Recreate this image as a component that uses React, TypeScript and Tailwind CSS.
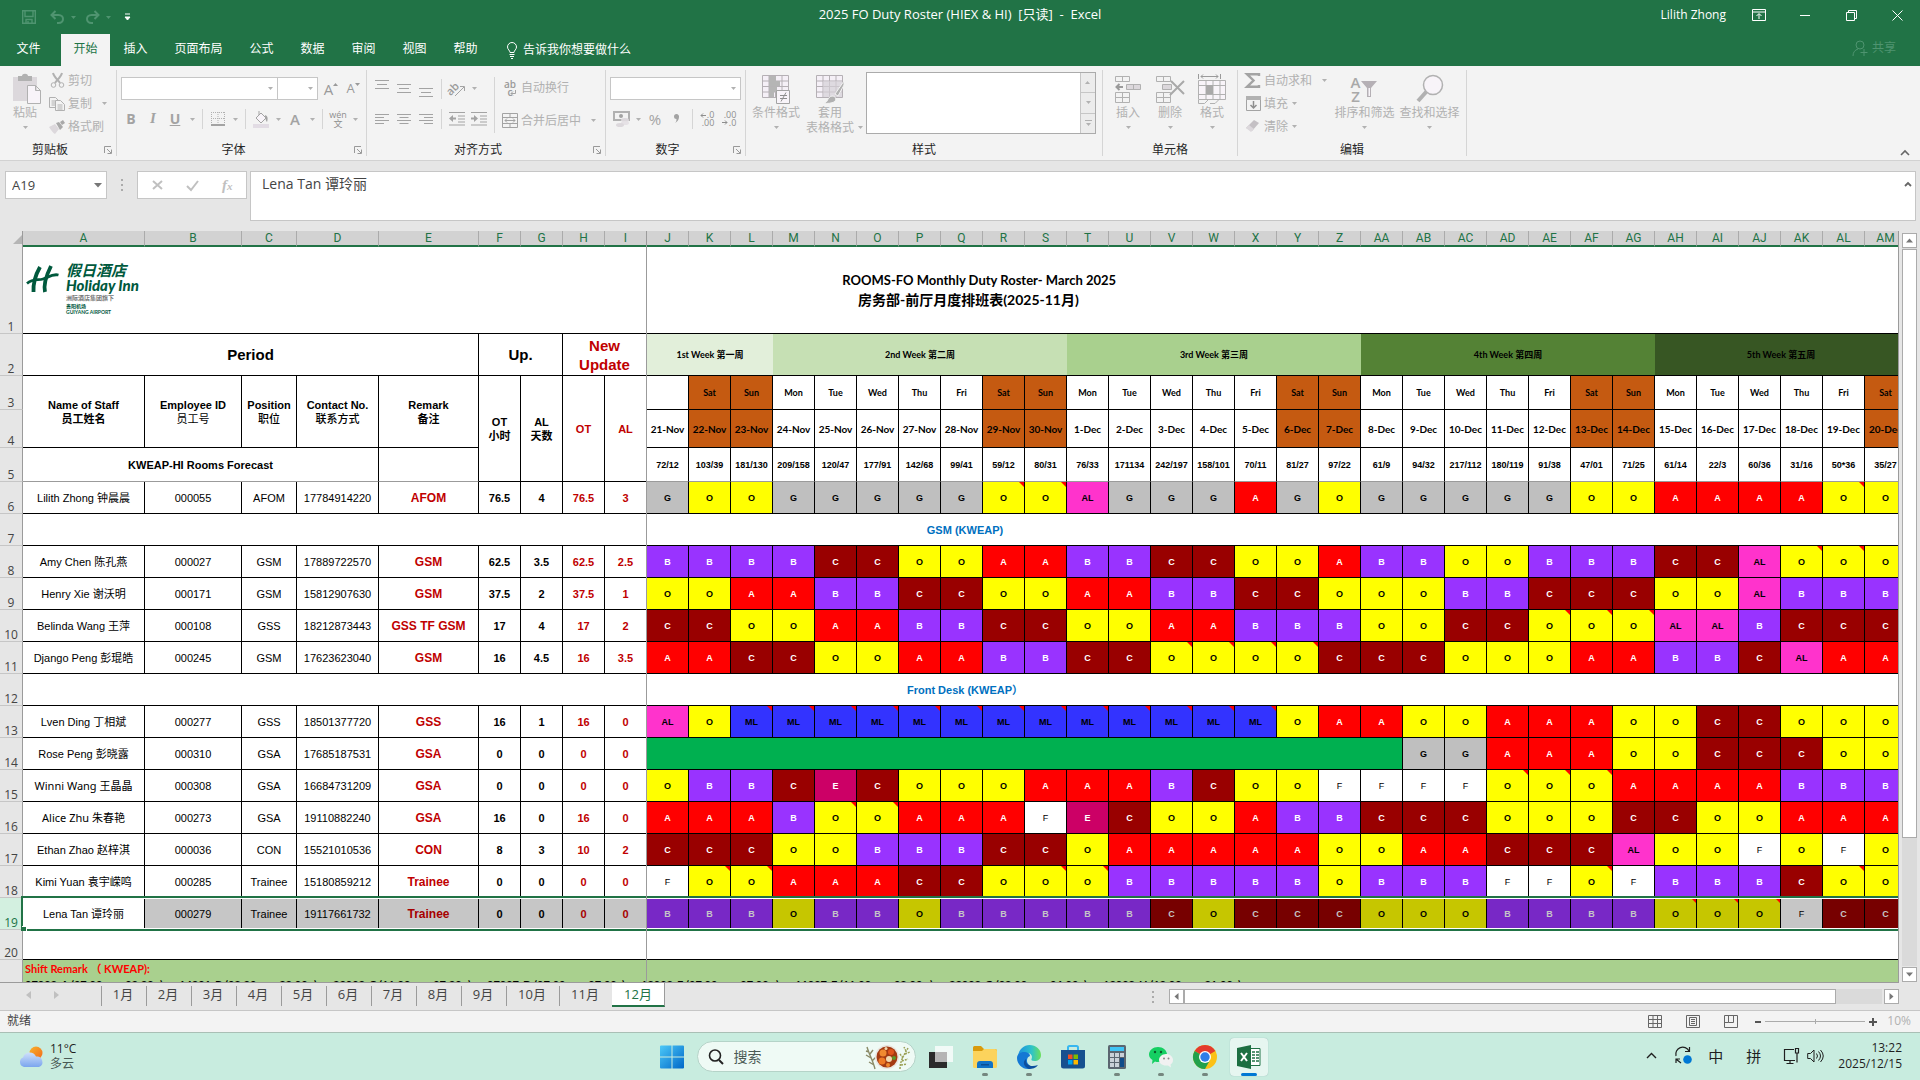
import React from 'react'
import clsx from 'clsx'

const SHIFT_STYLES: Record<string, string> = {
  A: 'bg-[#ff0000] text-white',
  B: 'bg-[#9933ff] text-white',
  C: 'bg-[#990000] text-white',
  E: 'bg-[#cc0066] text-white',
  F: 'bg-white text-black',
  G: 'bg-[#bfbfbf] text-black',
  O: 'bg-[#ffff00] text-black',
  AL: 'bg-[#ff33cc] text-black',
  ML: 'bg-[#3333ff] text-black',
}

// the selected row is drawn darker, as if under a grey veil
const SELECTED_STYLES: Record<string, string> = {
  B: 'bg-[#7828c6] text-[#c6c6c6]',
  C: 'bg-[#770000] text-[#c6c6c6]',
  O: 'bg-[#c6c600] text-black',
  F: 'bg-[#c6c6c6] text-black',
}

const COLUMNS = 'A B C D E F G H I J K L M N O P Q R S T U V W X Y Z AA AB AC AD AE AF AG AH AI AJ AK AL AM'.split(' ')

const DAYS = ['', 'Sat', 'Sun', 'Mon', 'Tue', 'Wed', 'Thu', 'Fri', 'Sat', 'Sun', 'Mon', 'Tue', 'Wed', 'Thu', 'Fri', 'Sat', 'Sun', 'Mon', 'Tue', 'Wed', 'Thu', 'Fri', 'Sat', 'Sun', 'Mon', 'Tue', 'Wed', 'Thu', 'Fri', 'Sat']

const DATES = DAYS.map((_, i) => (i < 10 ? `${21 + i}-Nov` : `${i - 9}-Dec`))

const FORECAST = '72/12 103/39 181/130 209/158 120/47 177/91 142/68 99/41 59/12 80/31 76/33 171134 242/197 158/101 70/11 81/27 97/22 61/9 94/32 217/112 180/119 91/38 47/01 71/25 61/14 22/3 60/36 31/16 50*36 35/27'.split(' ')

const WEEKS = [
  { label: '1st Week 第一周', span: 3, bg: 'bg-[#e2efda]' },
  { label: '2nd Week 第二周', span: 7, bg: 'bg-[#c6e0b4]' },
  { label: '3rd Week 第三周', span: 7, bg: 'bg-[#a9d08e]' },
  { label: '4th Week 第四周', span: 7, bg: 'bg-[#548235]' },
  { label: '5th Week 第五周', span: 6, bg: 'bg-[#375623]' },
]

type Staff = {
  row: number
  name: string
  id: string
  position: string
  phone: string
  remark: string
  hours: string[]
  shifts: string // a star marks a cell with a note
  leave?: number
  wide?: boolean
}

const MANAGER: Staff[] = [
  { row: 6, name: 'Lilith Zhong 钟晨晨', id: '000055', position: 'AFOM', phone: '17784914220', remark: 'AFOM', hours: ['76.5', '4', '76.5', '3'], shifts: 'G O O G G G G G O* O* AL G G G A G O G G G G G O O A A A A O* O' },
]

const GSM: Staff[] = [
  { row: 8, name: 'Amy Chen 陈孔燕', id: '000027', position: 'GSM', phone: '17889722570', remark: 'GSM', hours: ['62.5', '3.5', '62.5', '2.5'], shifts: 'B B B B C C O O A A B B C C O O A B B O O B B B C C AL O* O* O' },
  { row: 9, name: 'Henry Xie 谢沃明', id: '000171', position: 'GSM', phone: '15812907630', remark: 'GSM', hours: ['37.5', '2', '37.5', '1'], shifts: 'O O A A B B C C O O A A B B C C O O O B B C C C O O AL B B B' },
  { row: 10, name: 'Belinda Wang 王萍', id: '000108', position: 'GSS', phone: '18212873443', remark: 'GSS TF GSM', hours: ['17', '4', '17', '2'], shifts: 'C C O O A A B B C C O O A A B B B O O C C O* O* O* AL AL B C C C' },
  { row: 11, name: 'Django Peng 彭琨皓', id: '000245', position: 'GSM', phone: '17623623040', remark: 'GSM', hours: ['16', '4.5', '16', '3.5'], shifts: 'A A C C O O A A B B C C O* O* O* O* C C C O O O A A B B C AL A A' },
]

const FRONT_DESK: Staff[] = [
  { row: 13, name: 'Lven Ding 丁相斌', id: '000277', position: 'GSS', phone: '18501377720', remark: 'GSS', hours: ['16', '1', '16', '0'], shifts: 'AL O ML* ML* ML* ML* ML* ML* ML* ML* ML* ML* ML* ML* ML* O A A O O A A A O O C C O O O' },
  { row: 14, name: 'Rose Peng 彭晓露', id: '000310', position: 'GSA', phone: '17685187531', remark: 'GSA', hours: ['0', '0', '0', '0'], leave: 18, shifts: 'G G A A A O O C C C O O' },
  { row: 15, name: 'Winni Wang 王晶晶', id: '000308', position: 'GSA', phone: '16684731209', remark: 'GSA', hours: ['0', '0', '0', '0'], wide: true, shifts: 'O B B C E C O O O A A A B C O O F F F F O* O* O* A A A A B B B' },
  { row: 16, name: 'Alice Zhu 朱春艳', id: '000273', position: 'GSA', phone: '19110882240', remark: 'GSA', hours: ['16', '0', '16', '0'], wide: true, shifts: 'A A A B O* O* A A A F E C O O A B B C C C O O O C C O O A A A' },
  { row: 17, name: 'Ethan Zhao 赵梓淇', id: '000036', position: 'CON', phone: '15521010536', remark: 'CON', hours: ['8', '3', '10', '2'], shifts: 'C C C O O B B B C C O A A A A A O O A A C C C AL O O F O F O' },
  { row: 18, name: 'Kimi Yuan 袁宇嵘鸣', id: '000285', position: 'Trainee', phone: '15180859212', remark: 'Trainee', hours: ['0', '0', '0', '0'], shifts: 'F O* O* A A A C C O O* O* B B B B B O B B B F F O* F B B B C O* O' },
  { row: 19, name: 'Lena Tan 谭玲丽', id: '000279', position: 'Trainee', phone: '19117661732', remark: 'Trainee', hours: ['0', '0', '0', '0'], shifts: 'B B B O B B O B B B B B C O C C C O O O B B B B O* O* O* F C C' },
]

const REMARKS = [
  '07003-A (07:00 —— 03:30',
  '14301-B (03:30 —— 23:00',
  '23003-C (11:00 —— 07:30',
  '07007-D (07:00 —— 07:00',
  '18003-E (07:00 —— 07:00',
  '11007-F (11:00 —— 08:00',
  '23003-G (08:00 —— 06:00',
  '12008-H (13:00 —— 21:00',
]

const SHEETS = ['1月', '2月', '3月', '4月', '5月', '6月', '7月', '8月', '9月', '10月', '11月', '12月']

/* ---------- ribbon pieces ---------- */

function Svg({ w, h, className, children }: { w: number; h: number; className?: string; children: React.ReactNode }) {
  return (
    <svg width={w} height={h} viewBox={`0 0 ${w} ${h}`} fill="none" className={clsx('shrink-0 overflow-visible', className)} aria-hidden="true">
      {children}
    </svg>
  )
}

function Caret({ className }: { className?: string }) {
  return (
    <span className={clsx('flex w-3 shrink-0 items-center justify-center', className)}>
      <Svg w={5} h={3}><path d="M0 0h5L2.500 3z" fill="currentColor" /></Svg>
    </span>
  )
}

const Sep = () => <span className="mx-1 h-5 w-px shrink-0 bg-[#d5d5d5]" />

function Tool({ label, children }: { label: string; children: React.ReactNode }) {
  return (
    <button type="button" aria-label={label} className="flex h-6 w-[22px] shrink-0 items-center justify-center">
      {children}
    </button>
  )
}

function BigTool({ label, second, className, children }: { label: string; second?: string; className: string; children: React.ReactNode }) {
  return (
    <button type="button" className={clsx('flex shrink-0 flex-col items-center pt-1 leading-[15px] whitespace-nowrap', className)}>
      <span className="flex h-[30px] items-center">{children}</span>
      <span className="mt-px">{label}</span>
      {second ? (
        <span className="relative">{second}<Caret className="absolute top-0 left-full h-[15px]" /></span>
      ) : (
        <Caret className="h-[15px]" />
      )}
    </button>
  )
}

function RowTool({ label, caret, children }: { label: string; caret?: string; children: React.ReactNode }) {
  return (
    <button type="button" className="flex h-[23px] items-center pb-0.5 whitespace-nowrap">
      <span className="flex w-[22px] justify-center">{children}</span>
      {label}
      {caret !== undefined && <Caret className={caret} />}
    </button>
  )
}

function Group({ title, className, launcher, children }: { title: string; className: string; launcher?: boolean; children: React.ReactNode }) {
  return (
    <section className={clsx('flex h-[86px] shrink-0 flex-col border-r border-[#d5d5d5]', className)}>
      <div className="flex h-[74px]">{children}</div>
      <div className="flex h-3 items-center">
        <h2 className="flex-1 text-center leading-3 text-[#262626]">{title}</h2>
        {launcher && (
          <button type="button" aria-label={title + '设置'} className="flex w-4 items-center pl-1 text-[#999]">
            <Svg w={8} h={8}><path d="M.5 7V.5H7M3 3l4 4M7.500 3.500v4h-4" stroke="currentColor" /></Svg>
          </button>
        )}
      </div>
    </section>
  )
}

function Lines({ at, widths, align = 'left' }: { at: number[]; widths: number[]; align?: string }) {
  return (
    <Svg w={14} h={20}>
      {at.map((y, i) => {
        const w = widths[i]
        const x = align === 'left' ? 0 : align === 'right' ? 14 - w : (14 - w) / 2
        return <rect key={y} x={x} y={y} width={w} height={1} fill="#a3a3a3" />
      })}
    </Svg>
  )
}

function TableIcon({ children }: { children?: React.ReactNode }) {
  return (
    <Svg w={30} h={30}>
      <path d="M1.500 1.500h26v22h-26zM1.500 7h26M1.500 12.500h26M1.500 18h26M8 1.500v22M14.500 1.500v22M21 1.500v22" fill="#f5f0f7" stroke="#b5b0b5" />
      {children}
    </Svg>
  )
}

function TitleBar() {
  return (
    <header className="flex h-[34px] items-center bg-[#217346] text-xs text-white">
      <div className="flex flex-1 items-center text-[#4f9470]">
        <button type="button" aria-label="保存" className="ml-[22px]">
          <Svg w={14} h={14}><path d="M.7.7h12.600v12.600H.7zM3 1v5.500h8V1M4 13V9.500h6V13M6 11v2" stroke="currentColor" strokeWidth="1.400" /></Svg>
        </button>
        <button type="button" aria-label="撤消" className="ml-3.5 flex items-center">
          <Svg w={15} h={14}><path d="M5.500 1 1.500 5l4 4M2 5h6.500c6 0 6 8 0 8H7" stroke="currentColor" strokeWidth="2" /></Svg>
          <Caret className="ml-0.5" />
        </button>
        <button type="button" aria-label="恢复" className="ml-1.5 flex items-center">
          <Svg w={15} h={14}><path d="m9.500 1 4 4-4 4M13 5H6.500c-6 0-6 8 0 8H8" stroke="currentColor" strokeWidth="2" /></Svg>
          <Caret className="ml-0.5" />
        </button>
        <button type="button" aria-label="自定义" className="ml-2.5 text-white">
          <Svg w={7} h={8}><path d="M1 1h5M1 4h5L3.500 7z" stroke="currentColor" fill="currentColor" /></Svg>
        </button>
      </div>
      <h1 className="pb-1 text-[13px] whitespace-pre">{'2025 FO Duty Roster (HIEX & HI)  [只读]  -  Excel'}</h1>
      <div className="flex flex-1 items-center justify-end pb-1">
        <span className="mr-2.5">Lilith Zhong</span>
        <button type="button" aria-label="功能区显示选项" className="flex w-[46px] justify-center">
          <Svg w={14} h={12}><path d="M.5.5h13v11H.5zM.5 3h13M7 10V5M4.500 7 7 4.500 9.500 7" stroke="#fff" /></Svg>
        </button>
        <button type="button" aria-label="最小化" className="flex w-[46px] justify-center"><Svg w={10} h={10}><path d="M0 5.500h10" stroke="#fff" /></Svg></button>
        <button type="button" aria-label="还原" className="flex w-[46px] justify-center"><Svg w={11} h={11}><path d="M.5 2.500h8v8h-8zM2.500 2.500v-2h8v8h-2" stroke="#fff" /></Svg></button>
        <button type="button" aria-label="关闭" className="flex w-[46px] justify-center"><Svg w={11} h={11}><path d="m.5.5 10 10M10.500.5l-10 10" stroke="#fff" /></Svg></button>
      </div>
    </header>
  )
}

function RibbonTabs() {
  return (
    <nav className="flex h-8 bg-[#217346] text-xs text-white">
      <button type="button" className="w-[61px] pr-1 pb-0.5">文件</button>
      <button type="button" className="w-[49px] bg-[#f3f3f3] pb-0.5 text-[#217346]">开始</button>
      <button type="button" className="w-[51px] pb-0.5">插入</button>
      <button type="button" className="w-[75px] pb-0.5">页面布局</button>
      {['公式', '数据', '审阅', '视图', '帮助'].map((t) => (
        <button key={t} type="button" className="w-[51px] pb-0.5">{t}</button>
      ))}
      <button type="button" className="ml-[15px] flex items-center gap-[5px]">
        <Svg w={12} h={17}><path d="M3.500 12.500h5M4 14.500h4M5 16.500h2M4 10.500c0-2-2.500-3-2.500-5.500a4.500 4.500 0 0 1 9 0c0 2.500-2.500 3.500-2.500 5.500z" stroke="#fff" /></Svg>
        告诉我你想要做什么
      </button>
      <button type="button" className="mr-6 ml-auto flex items-center gap-1 pb-1 text-[#4f9470]">
        <Svg w={16} h={17}><circle cx="8" cy="5" r="4" stroke="currentColor" /><path d="M1 16c0-4 2-6 5-7M12 9v7M8.500 12.500h7" stroke="currentColor" /></Svg>
        共享
      </button>
    </nav>
  )
}

function Ribbon() {
  return (
    <div className="flex h-[95px] border-b border-[#d2d2d2] bg-[#f3f3f3] pt-1 text-xs text-[#b1b1b1]">
      <Group title="剪贴板" className="w-[117px]" launcher>
        <BigTool label="粘贴" className="ml-1 w-[42px]">
          <Svg w={27} h={30}>
            <path d="M1 3h24v24H1z" fill="#dcd8dc" />
            <path d="M6 2h4c0-3 6-3 6 0h4v5H6z" fill="#b1b1b1" />
            <path d="M15.500 11.500h8l5 5v13h-13zM23.500 11.500v5h5" fill="#f8f4f9" stroke="#b1b1b1" />
          </Svg>
        </BigTool>
        <div className="flex flex-col">
          <RowTool label="剪切">
            <Svg w={15} h={15}><path d="M3 0c1 4 5 7 7 10M12 0c-1 4-5 7-7 10" stroke="#b1b1b1" strokeWidth="2" /><circle cx="3.500" cy="12" r="2.300" stroke="#b1b1b1" /><circle cx="11.500" cy="12" r="2.300" stroke="#b1b1b1" /></Svg>
          </RowTool>
          <RowTool label="复制" caret="ml-1.5">
            <Svg w={16} h={14}><path d="M.5.5h6l3 3v7h-9zM2.500 4h4M2.500 6h4M2.500 8h4" stroke="#b1b1b1" /><path d="M6.500 3.500h5l4 4v6h-9zM8.500 8h5M8.500 10h5M8.500 12h5" fill="#f3f3f3" stroke="#b1b1b1" /></Svg>
          </RowTool>
          <RowTool label="格式刷">
            <Svg w={16} h={14}><path d="m0 7 6-3 4 5-4 5c-2-1-4-4-6-7z" fill="#dcd8dc" /><path d="m7 3 3-1 4 5-3 3zM11 2l3-2 2 3-3 2z" fill="#a9a9a9" /></Svg>
          </RowTool>
        </div>
      </Group>

      <Group title="字体" className="w-[250px]" launcher>
        <div className="flex flex-col gap-[7px] pt-[7px]">
          <div className="flex h-[23px] items-center pl-1">
            <select aria-label="字体" disabled className="h-full w-[157px] appearance-none border border-[#c6c6c6] bg-white"><option /></select>
            <Caret className="-ml-[14px] mr-0.5" />
            <select aria-label="字号" disabled className="h-full w-[40px] appearance-none border border-l-0 border-[#c6c6c6] bg-white"><option /></select>
            <Caret className="-ml-[14px] mr-1" />
            <Tool label="增大字号"><span className="text-[15px] text-[#9a9a9a]">A</span><Svg w={5} h={12}><path d="M0 3h5L2.500 0z" fill="#9a9a9a" /></Svg></Tool>
            <Tool label="减小字号"><span className="text-[13px] text-[#9a9a9a]">A</span><Svg w={5} h={12}><path d="M0 0h5L2.500 3z" fill="#9a9a9a" /></Svg></Tool>
          </div>
          <div className="flex h-6 items-center pl-[3px]">
            <Tool label="加粗"><b className="text-sm text-[#a3a3a3]">B</b></Tool>
            <Tool label="倾斜"><i className="font-['Liberation_Serif'] text-[15px] font-bold text-[#a3a3a3]">I</i></Tool>
            <Tool label="下划线"><u className="text-sm font-bold text-[#a3a3a3]">U</u></Tool>
            <Caret />
            <Sep />
            <Tool label="边框"><Svg w={14} h={14}><path d="M.5 0v13M7 0v13M13.500 0v13M0 .5h14M0 6.500h14" stroke="#b1b1b1" strokeDasharray="1 1" /><path d="M0 13h14" stroke="#a3a3a3" strokeWidth="2" /></Svg></Tool>
            <Caret />
            <Sep />
            <Tool label="填充颜色"><Svg w={17} h={17}><path d="m3 7 5-5 5 5-5 5zM6 4V0" fill="#f8f4f9" stroke="#a3a3a3" /><path d="M12 4c3 1 3 4 2 7-1-1-2-4-2-7z" fill="#a3a3a3" /><path d="M0 13h16v4H0z" fill="#e2dce4" /></Svg></Tool>
            <Caret />
            <Tool label="字体颜色"><span className="text-[15px] font-semibold text-[#a3a3a3]">A</span></Tool>
            <Caret />
            <Sep />
            <Tool label="拼音指南"><span className="flex flex-col items-center text-[9px] leading-[9px] text-[#8e8e8e]"><span>wén</span><span>文</span></span></Tool>
            <Caret />
          </div>
        </div>
      </Group>

      <Group title="对齐方式" className="w-[239px]" launcher>
        <div className="flex flex-col gap-[7px] pt-[7px] pl-1">
          <div className="flex h-[23px] items-center">
            <Tool label="顶端对齐"><Lines at={[1, 5, 9]} widths={[14, 10, 14]} align="center" /></Tool>
            <Tool label="垂直居中"><Lines at={[5, 9, 13]} widths={[14, 10, 14]} align="center" /></Tool>
            <Tool label="底端对齐"><Lines at={[9, 13, 17]} widths={[14, 10, 14]} align="center" /></Tool>
            <Sep />
            <Tool label="方向"><Svg w={17} h={16}><text x="-2" y="11" fontSize="11" fontWeight="600" fill="#9a9a9a" transform="rotate(-45 5 9)">ab</text><path d="m6 15 9-9M11 5.500h4.500V10" stroke="#a3a3a3" /></Svg></Tool>
            <Caret />
          </div>
          <div className="flex h-6 items-center">
            <Tool label="左对齐"><Lines at={[5, 8, 11, 14]} widths={[14, 9, 14, 9]} /></Tool>
            <Tool label="居中"><Lines at={[5, 8, 11, 14]} widths={[14, 9, 14, 9]} align="center" /></Tool>
            <Tool label="右对齐"><Lines at={[5, 8, 11, 14]} widths={[14, 9, 14, 9]} align="right" /></Tool>
            <Sep />
            <Tool label="减少缩进"><Svg w={16} h={14}><path d="M0 .5h16M9 4h7M9 7h7M9 10h7M0 13h16" stroke="#a3a3a3" /><path d="M0 6.500 4 3v7zM4 5.500h3v2H4z" fill="#a3a3a3" /></Svg></Tool>
            <Tool label="增加缩进"><Svg w={16} h={14}><path d="M0 .5h16M9 4h7M9 7h7M9 10h7M0 13h16" stroke="#a3a3a3" /><path d="M7 6.500 3 3v7zM0 5.500h3v2H0z" fill="#a3a3a3" /></Svg></Tool>
          </div>
        </div>
        <div className="mt-[7px] ml-1 flex h-[56px] flex-col justify-between border-l border-[#d5d5d5] pl-1">
          <RowTool label="自动换行">
            <span className="relative flex flex-col text-[10px] leading-[8px] font-semibold text-[#9a9a9a]">
              <span>ab</span>
              <span>c</span>
              <Svg w={6} h={6} className="absolute right-0 bottom-0"><path d="M5.500 0v3.500H1M3 1.500l-2 2 2 2" stroke="#a3a3a3" /></Svg>
            </span>
          </RowTool>
          <RowTool label="合并后居中" caret="ml-1.5">
            <Svg w={16} h={15}><path d="M.5.5h15v14H.5zM.5 4.500h15M.5 10.500h15M8 .5v4M8 10.500v4M3 7.500h10M5 5.500l-2 2 2 2M11 5.500l2 2-2 2" stroke="#a3a3a3" /></Svg>
          </RowTool>
        </div>
      </Group>

      <Group title="数字" className="w-[140px]" launcher>
        <div className="flex flex-col gap-[7px] pt-[7px] pl-1">
          <div className="flex h-[23px] items-center">
            <select aria-label="数字格式" disabled className="h-full w-[131px] appearance-none border border-[#c6c6c6] bg-white"><option /></select>
            <Caret className="-ml-[14px]" />
          </div>
          <div className="flex h-6 items-center">
            <Tool label="会计数字格式"><Svg w={17} h={16}><path d="M1 1h15v8H1z" stroke="#b1b1b1" strokeWidth="2" /><circle cx="8" cy="5" r="2" fill="#a3a3a3" /><ellipse cx="12" cy="9" rx="4" ry="2" fill="#dcd8dc" /><ellipse cx="12" cy="12" rx="4" ry="2" fill="#e6e2e6" /><ellipse cx="7" cy="14" rx="4" ry="2" fill="#dcd8dc" /></Svg></Tool>
            <Caret />
            <Tool label="百分比样式"><span className="text-[15px] text-[#a3a3a3]">%</span></Tool>
            <Tool label="千位分隔样式"><Svg w={6} h={10}><path d="M2.500 0a2.500 2.500 0 0 1 2.500 3c0 3-2 5-4 6 1-1 1.500-2 1.500-4A2.500 2.500 0 0 1 2.500 0z" fill="#a3a3a3" /></Svg></Tool>
            <Sep />
            <Tool label="增加小数位数">
              <span className="relative flex flex-col items-end text-[9px] leading-[8px] text-[#8e8e8e]">
                <span>.0</span>
                <span>.00</span>
                <Svg w={6} h={5} className="absolute top-0.5 -left-0.5"><path d="M6 2.500H1M3 .5l-2 2 2 2" stroke="#8e8e8e" /></Svg>
              </span>
            </Tool>
            <Tool label="减少小数位数">
              <span className="relative flex flex-col items-end text-[9px] leading-[8px] text-[#8e8e8e]">
                <span>.00</span>
                <span>.0</span>
                <Svg w={6} h={5} className="absolute bottom-0.5 -left-0.5"><path d="M0 2.500h5M3 .5l2 2-2 2" stroke="#8e8e8e" /></Svg>
              </span>
            </Tool>
          </div>
        </div>
      </Group>

      <Group title="样式" className="w-[357px]">
        <BigTool label="条件格式" className="ml-1 w-[52px]">
          <TableIcon>
            <path d="M8 2h7v5H8zM8 7h11v5H8zM8 12.500h8V18H8zM8 18h5v5H8z" fill="#b5b5b5" />
            <path d="M15.500 16.500h13v13h-13z" fill="#f8f4f9" stroke="#a3a3a3" />
            <path d="M19 21.500h7M19 24.500h7M25 18.500l-5 9" stroke="#8e8e8e" />
          </TableIcon>
        </BigTool>
        <BigTool label="套用" second="表格格式" className="w-[56px]">
          <TableIcon>
            <path d="M8 7h19v16H8z" fill="#d4d0d6" opacity=".7" />
            <path d="m29 7-9 13 3 2 6-11z" fill="#b1b1b1" stroke="#f3f3f3" />
            <path d="M9 29c4 0 3-6 8-7 4 0 5 4 2 6-2 1-7 2-10 1z" fill="#b1b1b1" stroke="#f3f3f3" />
          </TableIcon>
        </BigTool>
        <div className="mt-0.5 ml-2 flex h-[62px] w-[230px] border border-[#ababab] bg-white">
          <div className="flex-1" />
          <div className="flex w-[15px] flex-col divide-y divide-[#c6c6c6] border-l border-[#c6c6c6] bg-[#ececec]">
            <button type="button" aria-label="上一行" className="flex flex-1 items-center justify-center"><Caret className="rotate-180" /></button>
            <button type="button" aria-label="下一行" className="flex flex-1 items-center justify-center"><Caret /></button>
            <button type="button" aria-label="其他样式" className="flex flex-1 flex-col items-center justify-center gap-0.5"><span className="h-px w-[7px] bg-[#b1b1b1]" /><Caret /></button>
          </div>
        </div>
      </Group>

      <Group title="单元格" className="w-[135px]">
        <BigTool label="插入" className="ml-1 w-[42px]">
          <Svg w={28} h={30}><path d="M1.500 2.500h14v5h-14zM8.500 2.500v5M1.500 18.500h14v10h-14zM8.500 18.500v10M1.500 23.500h14" stroke="#b1b1b1" /><path d="M12.500 10.500h14v5h-14zM19.500 10.500v5" fill="#dcd8dc" stroke="#b1b1b1" /><path d="M9 13H3M5.500 10 2.500 13l3 3" stroke="#9a9a9a" strokeWidth="2" /></Svg>
        </BigTool>
        <BigTool label="删除" className="w-[42px]">
          <Svg w={30} h={30}><path d="M1.500 2.500h14v5h-14zM8.500 2.500v5M1.500 18.500h14v10h-14zM8.500 18.500v10M1.500 23.500h14" stroke="#b1b1b1" /><path d="M7.500 10.500h9v5h-9z" fill="#dcd8dc" stroke="#b1b1b1" /><path d="m16 7 13 13M29 7 15 21" stroke="#a9a9a9" strokeWidth="2" /></Svg>
        </BigTool>
        <BigTool label="格式" className="w-[42px]">
          <Svg w={28} h={30}><path d="M.5 0v5M22.500 0v5M3 2.500h17M5 .5l-2 2 2 2M18 .5l2 2-2 2" stroke="#9a9a9a" /><path d="M.5 6.500h27v19H.5zM.5 11.500h27M.5 20.500h27M8 6.500v19M15 6.500v19M22 6.500v19" fill="#f8f4f9" stroke="#b1b1b1" /><path d="M8 11h7v9H8z" fill="#a9a9a9" /><path d="M.5 26v3.500h6l4-4M12 29.500h5l4-4" stroke="#b1b1b1" /></Svg>
        </BigTool>
      </Group>

      <Group title="编辑" className="w-[229px]">
        <div className="ml-1 flex w-[90px] flex-col">
          <RowTool label="自动求和" caret="ml-1.5"><Svg w={16} h={15}><path d="M14 3V1.200H2L8.500 7.500 2 13.800h12V12" stroke="#a3a3a3" strokeWidth="2.400" /></Svg></RowTool>
          <RowTool label="填充" caret=""><Svg w={15} h={15}><path d="M.5.5h14v14H.5z" stroke="#a3a3a3" /><path d="M0 0h15v4H0z" fill="#b1b1b1" /><path d="M7.500 5v7M4.500 9l3 3 3-3" stroke="#8e8e8e" strokeWidth="1.500" /></Svg></RowTool>
          <RowTool label="清除" caret=""><Svg w={14} h={13}><path d="m0 8 8-8 5 3-7 8z" fill="#c4c0c4" /><path d="m0 8 3-3 5 4-3 3z" fill="#dcd8dc" /></Svg></RowTool>
        </div>
        <BigTool label="排序和筛选" className="w-[65px]">
          <span className="flex items-center">
            <span className="flex flex-col text-[15px] leading-[14px] font-semibold text-[#a9a9a9]"><span>A</span><span>Z</span></span>
            <Svg w={18} h={18}><path d="M1 1h16l-6 7v9H7V8z" fill="#b5b0b5" /><path d="M8.500 8h1.500v8H8.500z" fill="#f8f4f9" /></Svg>
          </span>
        </BigTool>
        <BigTool label="查找和选择" className="w-[65px]">
          <Svg w={28} h={30}><path d="m11 17-9 10" stroke="#b1b1b1" strokeWidth="4" /><circle cx="17" cy="11" r="9.500" fill="#f8f4f9" stroke="#b1b1b1" strokeWidth="1.500" /></Svg>
        </BigTool>
      </Group>

      <button type="button" aria-label="折叠功能区" className="mr-2.5 mb-1 ml-auto self-end">
        <Svg w={10} h={7}><path d="m1 6 4-4 4 4" stroke="#666" strokeWidth="1.600" /></Svg>
      </button>
    </div>
  )
}

function FormulaBar() {
  return (
    <div className="flex h-[70px] items-start pt-2.5 pr-1 pl-[5px] text-[13px] text-[#444]">
      <div className="flex h-[28px] w-[102px] items-center border border-[#c6c6c6] bg-white pr-1">
        <input aria-label="名称框" defaultValue="A19" className="h-full min-w-0 flex-1 pl-1.5 outline-none" />
        <Svg w={8} h={5}><path d="M0 0h8L4 4.500z" fill="#777" /></Svg>
      </div>
      <div className="flex h-[28px] w-[30px] flex-col items-center justify-center gap-[3px]">
        <span className="size-0.5 bg-[#ababab]" /><span className="size-0.5 bg-[#ababab]" /><span className="size-0.5 bg-[#ababab]" />
      </div>
      <div className="flex h-[28px] w-[110px] items-center justify-around border border-[#c6c6c6] bg-white px-0.5 text-[#c0c0c0]">
        <button type="button" aria-label="取消"><Svg w={11} h={10}><path d="m1 1 9 8M10 1 1 9" stroke="currentColor" strokeWidth="2" /></Svg></button>
        <button type="button" aria-label="输入"><Svg w={13} h={11}><path d="m1 6 4 4 7-9" stroke="currentColor" strokeWidth="2" /></Svg></button>
        <button type="button" aria-label="插入函数" className="font-['Liberation_Serif'] text-[15px] leading-none font-bold italic">f<span className="text-[11px]">x</span></button>
      </div>
      <div className="ml-[3px] flex h-[50px] flex-1 border border-[#c6c6c6] bg-white">
        <textarea aria-label="编辑栏" defaultValue="Lena Tan 谭玲丽" className="h-full flex-1 resize-none overflow-hidden pt-0.5 pl-[11px] text-sm leading-5 outline-none" />
        <button type="button" aria-label="折叠编辑栏" className="mt-[9px] mr-[3px] self-start"><Svg w={8} h={6}><path d="m1 5 3-3 3 3" stroke="#666" strokeWidth="1.800" /></Svg></button>
      </div>
    </div>
  )
}

/* ---------- sheet ---------- */

const cell = 'border-r border-b border-black'

function RowHead({ n, className }: { n: number | string; className?: string }) {
  return (
    <th scope="row" className={clsx("border-r border-b border-r-[#9b9b9b] border-b-[#c6c6c6] align-bottom font-['Open_Sans'] text-xs leading-[12px] font-normal", className ?? 'bg-[#e6e6e6] text-[#444]')}>
      {n}
    </th>
  )
}

function ShiftCell({ code, selected }: { code: string; selected: boolean }) {
  const noted = code.endsWith('*')
  const key = noted ? code.slice(0, -1) : code
  return (
    <td className={clsx(cell, 'relative text-[9px]', key !== 'F' && 'font-bold', (selected ? SELECTED_STYLES : SHIFT_STYLES)[key])}>
      {key}
      {noted && <span className="absolute top-0 right-0 border-t-[5px] border-l-[5px] border-t-[#ff0000] border-l-transparent" />}
    </td>
  )
}

function StaffRow({ staff }: { staff: Staff }) {
  const selected = staff.row === 19
  const shade = selected ? 'bg-[#c6c6c6]' : ''
  const red = selected ? 'text-[#a60000]' : 'text-[#c00000]'
  return (
    <tr className="h-8 text-[11px]">
      <RowHead n={staff.row} className={selected ? 'bg-[#d3f0e0] text-[#217346]' : undefined} />
      <td className={clsx(cell, 'relative', staff.wide && "font-['Noto_Sans','Noto_Sans_CJK_SC',sans-serif]")}>
        {staff.name}
        {selected && (
          <>
            <span className="absolute -top-0.5 -left-0.5 z-10 h-[35px] w-[1900px] border-2 border-[#217346] shadow-[inset_0_0_0_1px_#fff]" />
            <span className="absolute -bottom-0.5 -left-px z-10 size-[5px] border-t border-r border-white bg-[#217346]" />
          </>
        )}
      </td>
      <td className={clsx(cell, shade)}>{staff.id}</td>
      <td className={clsx(cell, shade)}>{staff.position}</td>
      <td className={clsx(cell, shade)}>{staff.phone}</td>
      <td className={clsx(cell, shade, red, 'text-xs font-bold')}>{staff.remark}</td>
      {staff.hours.map((h, i) => (
        <td key={i} className={clsx(cell, shade, 'font-bold', i > 1 && red)}>{h}</td>
      ))}
      {staff.leave && <td colSpan={staff.leave} className={clsx(cell, 'bg-[#00b050]')} />}
      {staff.shifts.split(' ').map((code, i) => <ShiftCell key={i} code={code} selected={selected} />)}
    </tr>
  )
}

function SectionRow({ row, title }: { row: number; title: string }) {
  return (
    <tr className="h-8">
      <RowHead n={row} />
      <td colSpan={39} className="border-b border-black text-[11px] font-bold text-[#0070c0]">{title}</td>
    </tr>
  )
}

function HolidayInnLogo() {
  return (
    <div className="absolute top-4 left-1 flex gap-[7px] text-left text-[#00593d]">
      <Svg w={32} h={30} className="mt-0.5">
        <path d="M13 2C9 9 6 18 6.500 27M24 1c-4 8-8 17-6 26" stroke="currentColor" strokeWidth="3.800" />
        <path d="M0 18.500c6-5 11-3 16-4.500 5-1.500 9-5.500 15.500-4" stroke="currentColor" strokeWidth="2.800" />
      </Svg>
      <div className="whitespace-nowrap">
        <p className="text-[15px] leading-[15px] font-bold italic">假日酒店</p>
        <p className="font-['Lato'] text-[15px] leading-[15px] font-black italic">Holiday Inn</p>
        <p className="text-[6px] leading-[9px] text-[#777]">洲际酒店集团旗下</p>
        <p className="text-[5px] leading-[8px]">贵阳机场</p>
        <p className="text-[5px] leading-[5px] font-bold">GUIYANG AIRPORT</p>
      </div>
    </div>
  )
}

function Sheet() {
  const calibri = "font-['Lato','Noto_Sans_CJK_SC',sans-serif]"
  return (
    <main className="relative min-w-0 flex-1 overflow-hidden border-r border-b border-[#9b9b9b] bg-white">
      <table className="w-[1907px] table-fixed border-separate border-spacing-0 text-center font-['Liberation_Sans','Noto_Sans_CJK_SC',sans-serif] leading-[14px] text-black [&_td]:p-0 [&_th]:p-0">
        <colgroup>
          <col className="w-[23px]" />
          <col className="w-[122px]" />
          <col className="w-[97px]" />
          <col className="w-[55px]" />
          <col className="w-[82px]" />
          <col className="w-[100px]" />
          <col span={34} className="w-[42px]" />
        </colgroup>
        <thead>
          <tr className="h-4 font-['Roboto'] text-xs leading-[14px] text-[#217346]">
            <th className="border-r border-[#9b9b9b] bg-[#e6e6e6]"><Svg w={9} h={9} className="ml-auto"><path d="M9 0v9H0z" fill="#b5b5b5" /></Svg></th>
            {COLUMNS.map((c) => (
              <th key={c} scope="col" className="border-r border-b-2 border-r-[#ababab] border-b-[#217346] bg-[#d2d2d2] font-normal">{c}</th>
            ))}
          </tr>
        </thead>
        <tbody>
          <tr className="h-[87px]">
            <RowHead n={1} />
            <td colSpan={39} className={clsx('relative border-b border-black leading-5 font-bold whitespace-pre', calibri)}>
              <HolidayInnLogo />
              <p className="text-[13px]">{'         ROOMS-FO Monthly Duty Roster- March 2025'}</p>
              <p className="text-sm">{'  房务部-前厅月度排班表(2025-11月)'}</p>
            </td>
          </tr>
          <tr className="h-[42px] text-[15px] leading-[19px] font-bold">
            <RowHead n={2} />
            <td colSpan={5} className={cell}>Period</td>
            <td colSpan={2} className={cell}>Up.</td>
            <td colSpan={2} className={clsx(cell, 'text-[#c00000]')}>New<br />Update</td>
            {WEEKS.map((w) => (
              <td key={w.label} colSpan={w.span} className={clsx('border-b border-black text-[9px]', calibri, w.bg)}>{w.label}</td>
            ))}
          </tr>
          <tr className="h-[34px] text-[11px] font-bold">
            <RowHead n={3} />
            <td rowSpan={2} className={cell}>Name of Staff<br />员工姓名</td>
            <td rowSpan={2} className={cell}>Employee ID<br /><span className="font-normal">员工号</span></td>
            <td rowSpan={2} className={cell}>Position<br /><span className="font-medium">职位</span></td>
            <td rowSpan={2} className={cell}>Contact No.<br /><span className="font-medium">联系方式</span></td>
            <td rowSpan={2} className={cell}>Remark<br />备注</td>
            <td rowSpan={3} className={cell}>OT<br />小时</td>
            <td rowSpan={3} className={cell}>AL<br />天数</td>
            <td rowSpan={3} className={clsx(cell, 'text-[#c00000]')}>OT</td>
            <td rowSpan={3} className={clsx(cell, 'text-[#c00000]')}>AL</td>
            {DAYS.map((d, i) => (
              <td key={i} className={clsx(cell, calibri, 'text-[9px]', d.startsWith('S') && 'bg-[#c55a11]')}>{d}</td>
            ))}
          </tr>
          <tr className="h-[38px] text-[10px] font-bold">
            <RowHead n={4} />
            {DATES.map((d, i) => (
              <td key={d} className={clsx(cell, calibri, 'whitespace-nowrap', DAYS[i].startsWith('S') && 'bg-[#c55a11]')}>{d}</td>
            ))}
          </tr>
          <tr className="h-[34px] text-[11px] font-bold">
            <RowHead n={5} />
            <td colSpan={4} className={clsx(cell, 'border-b-[#9b9b9b]')}>KWEAP-HI Rooms Forecast</td>
            <td className={clsx(cell, 'border-b-[#9b9b9b]')} />
            {FORECAST.map((f, i) => (
              <td key={i} className={clsx(cell, 'border-b-[#9b9b9b] text-[9px]')}>{f}</td>
            ))}
          </tr>
          {MANAGER.map((s) => <StaffRow key={s.id} staff={s} />)}
          <SectionRow row={7} title="GSM (KWEAP)" />
          {GSM.map((s) => <StaffRow key={s.id} staff={s} />)}
          <SectionRow row={12} title="Front Desk (KWEAP）" />
          {FRONT_DESK.map((s) => <StaffRow key={s.id} staff={s} />)}
          <tr className="h-[30px]">
            <RowHead n={20} />
            <td colSpan={39} className="border-b border-black" />
          </tr>
          <tr className="h-[60px]">
            <RowHead n="" />
            <td colSpan={39} className={clsx('bg-[#a9d08e] text-left align-top text-[11px] font-bold', calibri)}>
              <p className="pl-0.5 leading-[17px] text-[#ff0000]">Shift Remark （ KWEAP):</p>
              <p className="flex pl-0.5 leading-[16px] whitespace-nowrap">
                {REMARKS.map((r) => (
                  <span key={r} className="flex w-[154px] justify-between pr-4">{r}<span>)</span></span>
                ))}
              </p>
            </td>
          </tr>
        </tbody>
      </table>
      {/* freeze pane line */}
      <span className="absolute top-0 left-[646px] z-20 h-full w-px bg-[#9b9b9b]" />
    </main>
  )
}

function ArrowButton({ label, d }: { label: string; d: string }) {
  return (
    <button type="button" aria-label={label} className="flex size-[15px] shrink-0 items-center justify-center border border-[#ababab] bg-white">
      <Svg w={7} h={7}><path d={d} fill="#777" /></Svg>
    </button>
  )
}

function SheetTabs() {
  return (
    <div className="flex h-[27px] items-start text-[13px] text-[#444]">
      <div className="flex h-6 w-[101px] items-center gap-[23px] pl-[26px] text-[#c0c0c0]">
        <button type="button" aria-label="上一个"><Svg w={5} h={8}><path d="M5 0v8L0 4z" fill="currentColor" /></Svg></button>
        <button type="button" aria-label="下一个"><Svg w={5} h={8}><path d="M0 0v8l5-4z" fill="currentColor" /></Svg></button>
      </div>
      {SHEETS.map((s, i) => (
        <button
          key={s}
          type="button"
          className={clsx(
            i > 8 ? 'w-[53px]' : 'w-[45px]',
            s === '12月'
              ? 'h-6 border-r border-b-2 border-r-[#9b9b9b] border-b-[#217346] bg-white leading-[22px] text-[#217346]'
              : 'mt-[3px] h-5 border-l border-[#9b9b9b] pr-0.5 pb-1 leading-4',
          )}
        >
          {s}
        </button>
      ))}
      <div className="mr-[21px] ml-auto flex items-center pt-1.5">
        <div className="mr-[15px] flex flex-col gap-[3px]">
          <span className="size-0.5 bg-[#ababab]" /><span className="size-0.5 bg-[#ababab]" /><span className="size-0.5 bg-[#ababab]" />
        </div>
        <ArrowButton label="向左滚动" d="M5.500 0v7L1.500 3.500z" />
        <div className="mr-0.5 flex h-[15px] w-[698px] bg-[#dadada]">
          <div className="w-[652px] border border-[#ababab] bg-white" />
        </div>
        <ArrowButton label="向右滚动" d="M1.500 0v7l4-3.500z" />
      </div>
    </div>
  )
}

function StatusBar() {
  return (
    <div className="flex h-[23px] items-center border-t border-b border-t-[#c6c6c6] border-b-[#a9bfb5] bg-[#f3f3f3] pl-[7px] text-xs text-[#444]">
      <span className="pb-0.5">就绪</span>
      <div className="ml-auto flex items-center pr-[9px]">
        <button type="button" aria-label="普通" className="mr-6"><Svg w={14} h={13}><path d="M.5.5h13v12H.5zM.5 4.500h13M.5 8.500h13M5 .5v12M9.500.5v12" stroke="#666" /></Svg></button>
        <button type="button" aria-label="页面布局视图" className="mr-6"><Svg w={14} h={13}><path d="M.5.5h13v12H.5zM3.500 2.500h7v8h-7zM5 4.500h4M5 6.500h4M5 8.500h4" stroke="#666" /></Svg></button>
        <button type="button" aria-label="分页预览" className="mr-[17px]"><Svg w={14} h={13}><path d="M.5.5h13v12H.5zM4.500.5v7h5v-7M.5 7.500h4" stroke="#666" /></Svg></button>
        <button type="button" aria-label="缩小"><Svg w={6} h={8}><path d="M0 4h6" stroke="#555" strokeWidth="2" /></Svg></button>
        <div className="relative mx-1 flex w-[100px] items-center">
          <input type="range" aria-label="缩放" className="h-px w-full appearance-none bg-[#ababab] [&::-webkit-slider-thumb]:size-0 [&::-webkit-slider-thumb]:appearance-none" />
          <span className="absolute left-1/2 h-[5px] w-px bg-[#ababab]" />
        </div>
        <button type="button" aria-label="放大"><Svg w={8} h={8}><path d="M0 4h8M4 0v8" stroke="#555" strokeWidth="2" /></Svg></button>
        <span className="ml-2.5 pb-0.5 text-[#b1b1b1]">10%</span>
      </div>
    </div>
  )
}

/* ---------- taskbar ---------- */

function App({ label, dot, active, children }: { label: string; dot?: boolean; active?: boolean; children: React.ReactNode }) {
  return (
    <button type="button" aria-label={label} className={clsx('relative mx-[3px] flex h-[38px] w-[38px] items-center justify-center rounded', active && 'bg-[#e6f6f0] shadow-[0_0_1px_#8aa]')}>
      {children}
      {dot && <span className="absolute bottom-0 h-[3px] w-1.5 rounded-full bg-[#75877f]" />}
      {active && <span className="absolute bottom-0 h-[3px] w-4 rounded-full bg-[#0078d4]" />}
    </button>
  )
}

function Taskbar() {
  return (
    <footer className="flex h-[47px] items-center bg-[#c8ecdf] text-xs text-[#1f1f1f]">
      <div className="flex flex-1 items-center gap-[7px] pb-0.5 leading-[15px]">
        <Svg w={24} h={22} className="mt-0.5 ml-[19px]">
          <defs>
            <linearGradient id="sun" x1="0" y1="0" x2="1" y2="1"><stop stopColor="#f9b22c" /><stop offset="1" stopColor="#f26a1b" /></linearGradient>
            <linearGradient id="cloud" x1="0" y1="0" x2="0" y2="1"><stop stopColor="#cfe0fb" /><stop offset="1" stopColor="#7ba5ee" /></linearGradient>
          </defs>
          <circle cx="17" cy="7" r="6.500" fill="url(#sun)" />
          <path d="M5 21a5 5 0 0 1-1-9.500 7 7 0 0 1 13-1 5.500 5.500 0 0 1 3 10.500z" fill="url(#cloud)" />
        </Svg>
        <div><p>11°C</p><p className="text-[#4a5a55]">多云</p></div>
      </div>

      <div className="flex items-center">
        <App label="开始">
          <Svg w={24} h={24}>
            <defs><linearGradient id="win" x1="0" y1="0" x2="1" y2="1"><stop stopColor="#4cc9f8" /><stop offset="1" stopColor="#0067c8" /></linearGradient></defs>
            <path d="M0 1.500Q0 .5 1 .5h10.500v11H0zM12.500.5H23q1 0 1 1v10H12.500zM0 12.500h11.500v11H1q-1 0-1-1zM12.500 12.500H24v10q0 1-1 1H12.500z" fill="url(#win)" />
          </Svg>
        </App>
        <label className="mx-[3px] flex h-[31px] w-[219px] items-center rounded-full border border-[#b5d3c8] bg-[#effaf5] pl-2.5">
          <Svg w={16} h={16}><circle cx="7" cy="6.500" r="5.500" stroke="#222" strokeWidth="1.600" /><path d="m11 11 4 4" stroke="#222" strokeWidth="2" /></Svg>
          <input aria-label="搜索" placeholder="搜索" className="ml-2.5 min-w-0 flex-1 bg-transparent text-sm outline-none placeholder:text-[#4c5a55]" />
          <Svg w={46} h={28} className="mr-1">
            <path d="M10 26C8 18 4 11 2 4M6 15 1 12M7 18l4-4M4 9 1 8M5 11l3-4M9 22l-5-3" stroke="#8a8a66" strokeWidth="1.400" />
            <path d="M35 26c0-8 4-14 8-21M37 18l6-2M38 15l-3-4M40 11l5-2M41 8l-2-4M36 22l6-1" stroke="#9aa055" strokeWidth="1.500" strokeDasharray="2 1" />
            <circle cx="22" cy="14" r="12" fill="#e9e4de" />
            <circle cx="22" cy="14" r="10.500" fill="#a33a12" />
            <circle cx="18" cy="10" r="3.500" fill="#f08a30" /><circle cx="26" cy="9" r="3" fill="#e0561e" /><circle cx="24" cy="16" r="3" fill="#f0d9b0" /><circle cx="17" cy="18" r="3.500" fill="#ee7a26" /><circle cx="29" cy="15" r="2" fill="#5a9a2a" /><circle cx="23" cy="22" r="2" fill="#f08a30" /><circle cx="21" cy="5.500" r="1.500" fill="#f0d9b0" />
          </Svg>
        </label>
        <App label="任务视图">
          <Svg w={24} h={24}><path d="M0 7h18v16H0z" fill="#2b2b2b" /><path d="M6 1h18v16H6z" fill="#fff" opacity=".75" /><path d="M6 7h12v10H6z" fill="#b5b5b5" /></Svg>
        </App>
        <App label="文件资源管理器" dot>
          <Svg w={24} h={22}><path d="M0 1.500Q0 0 1.500 0H8l3 3h11q2 0 2 2v6H0z" fill="#d99a0c" /><path d="M0 5h9l2-2h11q2 0 2 2v15.500q0 1.500-1.500 1.500h-21Q0 22 0 20.500z" fill="#fcd35c" /><path d="M4 22v-4q0-3 3-3h10q3 0 3 3v4z" fill="#1173c7" /><path d="M8 18h8v1.500H8z" fill="#0a4f94" /></Svg>
        </App>
        <App label="Edge" dot>
          <Svg w={24} h={24}>
            <defs><linearGradient id="edge" x1="0" y1="0" x2="1" y2="0"><stop stopColor="#1b8fe0" /><stop offset=".6" stopColor="#2fc3c8" /><stop offset="1" stopColor="#6ce05a" /></linearGradient></defs>
            <path d="M1 11C2 4 7 0 12.500 0 19 0 24 4.500 24 10c0 4-3 6-6.500 6-2.500 0-3.500-1-3-2 1.500-3-.5-6-4.500-6-4 0-8 1.500-9 3z" fill="url(#edge)" />
            <path d="M0 13c0-4 4-6.500 8-6 3 .3 5 2 5 4-4 1-5 9 3 11-2 1.500-3 2-5 2C5 24 0 19 0 13z" fill="#1478d4" />
            <path d="M9 14c-1 5 4 9 12 6-2 3-6 4-9 4-5-2-7-7-3-10z" fill="#0c4f9e" />
          </Svg>
        </App>
        <App label="Microsoft Store">
          <Svg w={24} h={24}><path d="M7 6V2.500Q7 1 8.500 1h7Q17 1 17 2.500V6" stroke="#37b7f0" strokeWidth="2" /><path d="M0 5h24v16q0 2.500-2.500 2.500h-19Q0 23.500 0 21z" fill="#17508f" /><path d="M7 9.500h4.500V14H7z" fill="#f25022" /><path d="M12.500 9.500H17V14h-4.500z" fill="#7fba00" /><path d="M7 15h4.500v4.500H7z" fill="#00a4ef" /><path d="M12.500 15H17v4.500h-4.500z" fill="#ffb900" /></Svg>
        </App>
        <App label="计算器" dot>
          <Svg w={18} h={24}><rect width="18" height="24" rx="1.500" fill="#5b6670" /><path d="M2 2h14v4H2z" fill="#3fc4f5" /><path d="M2 8h4v4H2zM7 8h4v4H7zM12 8h4v4h-4zM2 13h4v4H2zM7 13h4v4H7zM2 18h4v4H2zM7 18h4v4H7z" fill="#c9d1d8" /><path d="M12 13h4v9h-4z" fill="#0f4c8a" /></Svg>
        </App>
        <App label="微信" dot>
          <Svg w={24} h={22}><path d="M9 1c5 0 9 3.500 9 7.500S14 16 9 16c-1 0-2 0-3-.5L3 18l.5-4C1.500 13 0 11 0 8.500 0 4.500 4 1 9 1z" fill="#15cf62" /><circle cx="6" cy="6" r="1.200" fill="#0b5b2b" /><circle cx="12" cy="6" r="1.200" fill="#0b5b2b" /><path d="M17 8c4 0 7 2.700 7 6 0 2-1 3.500-2.500 4.500l.5 3-3-2h-2c-4 0-7-2.500-7-5.500s3-6 7-6z" fill="#f1f1f1" /><circle cx="15" cy="12.500" r="1" fill="#888" /><circle cx="19.500" cy="12.500" r="1" fill="#888" /></Svg>
        </App>
        <App label="Chrome" dot>
          <Svg w={24} h={24}>
            <circle cx="12" cy="12" r="12" fill="#fbc116" />
            <path d="M12 12 1.600 6A12 12 0 0 1 22.400 6z" fill="#e33b2e" />
            <path d="M12 12 1.600 6A12 12 0 0 0 12 24l5-9z" fill="#22a04b" />
            <circle cx="12" cy="12" r="6" fill="#fff" /><circle cx="12" cy="12" r="4.700" fill="#2f7de9" />
          </Svg>
        </App>
        <App label="Excel" active>
          <Svg w={24} h={24}><path d="M12 3.500h11v17H12z" fill="#fff" stroke="#217346" /><path d="M15 7h3M19 7h3M15 10h3M19 10h3M15 13h3M19 13h3M15 16h3M19 16h3" stroke="#217346" strokeWidth="1.500" /><path d="m0 3 14-3v24L0 21z" fill="#1d6f42" /><path d="m4 8 6 8M10 8l-6 8" stroke="#fff" strokeWidth="2" /></Svg>
        </App>
      </div>

      <div className="flex flex-1 items-center justify-end pb-0.5">
        <button type="button" aria-label="显示隐藏的图标"><Svg w={11} h={7}><path d="m1 6 4.500-4.500L10 6" stroke="#1f1f1f" strokeWidth="1.400" /></Svg></button>
        <button type="button" aria-label="更新" className="ml-[18px]"><Svg w={17} h={17}><path d="M1 9a7 7 0 0 1 13-5M14.500 0v4.500H10M1 16v-4h4M1.500 12.500 6 16" stroke="#1f1f1f" strokeWidth="1.200" /><circle cx="12.500" cy="12.500" r="4.300" fill="#0078d4" /></Svg></button>
        <button type="button" className="ml-4 text-[15px]">中</button>
        <button type="button" className="ml-[23px] text-[15px]">拼</button>
        <button type="button" aria-label="网络" className="ml-[22px]"><Svg w={17} h={16}><path d="M11 1.500H1.500v11H12M7 12.500v3M3.500 15.500h7M12.500.5h3V5h-3zM14 5v9.500" stroke="#1f1f1f" strokeWidth="1.200" /></Svg></button>
        <button type="button" aria-label="音量" className="ml-[7px]"><Svg w={17} h={14}><path d="M.7 4.500H3.500L7 1v12L3.500 9.500H.7zM9.500 4.500q2 2.500 0 5M11.500 2.500q4 4.500 0 9M13.500 1q5.500 6 0 12" stroke="#1f1f1f" /></Svg></button>
        <div className="mr-[18px] ml-3.5 text-right leading-4"><p>13:22</p><p>2025/12/15</p></div>
      </div>
    </footer>
  )
}

export default function ExcelDesktop() {
  return (
    <div className="flex h-screen flex-col overflow-hidden bg-[#e6e6e6] font-['Open_Sans','Noto_Sans_CJK_SC',sans-serif]">
      <TitleBar />
      <RibbonTabs />
      <Ribbon />
      <FormulaBar />
      <div className="flex min-h-0 flex-1">
        <Sheet />
        <div className="flex w-[21px] flex-col items-center pt-0.5 pb-px">
          <ArrowButton label="向上滚动" d="M0 5.500h7L3.500 1.500z" />
          <div className="mb-px flex w-[15px] flex-1 flex-col bg-[#dadada]">
            <div className="mt-px h-[82%] border border-[#ababab] bg-white" />
          </div>
          <ArrowButton label="向下滚动" d="M0 1.500h7l-3.500 4z" />
        </div>
      </div>
      <SheetTabs />
      <StatusBar />
      <Taskbar />
    </div>
  )
}
